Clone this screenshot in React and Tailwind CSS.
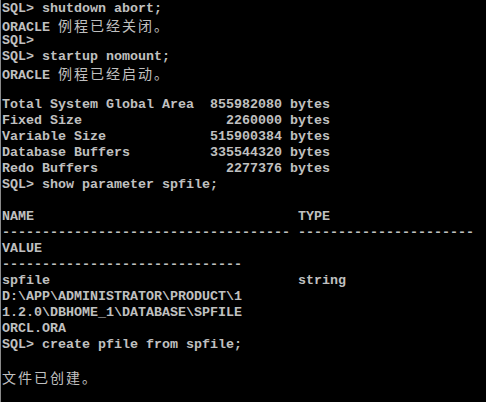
const lines = [
  [["SQL> shutdown abort;"]],
  [["ORACLE "], ["例程已经关闭。", true]],
  [["SQL>"]],
  [["SQL> startup nomount;"]],
  [["ORACLE "], ["例程已经启动。", true]],
  [[""]],
  [["Total System Global Area  855982080 bytes"]],
  [["Fixed Size                  2260000 bytes"]],
  [["Variable Size             515900384 bytes"]],
  [["Database Buffers          335544320 bytes"]],
  [["Redo Buffers                2277376 bytes"]],
  [["SQL> show parameter spfile;"]],
  [[""]],
  [["NAME                                 TYPE"]],
  [["------------------------------------ ----------------------"]],
  [["VALUE"]],
  [["------------------------------"]],
  [["spfile                               string"]],
  [["D:\\APP\\ADMINISTRATOR\\PRODUCT\\1"]],
  [["1.2.0\\DBHOME_1\\DATABASE\\SPFILE"]],
  [["ORCL.ORA"]],
  [["SQL> create pfile from spfile;"]],
  [[""]],
  [["文件已创建。", true]],
];

export default function App() {
  return (
    <div className="w-[486px] h-[402px] bg-black overflow-hidden border-l border-[#8a8a8a] pl-[1px] pt-[1px] flex flex-col">
      {lines.map((segs, i) => (
        <div
          key={i}
          className="h-[16px] leading-[16px] whitespace-pre text-[#c0c0c0] font-bold text-[13.34px] font-['Liberation_Mono',monospace] overflow-visible"
        >
          {segs.map(([t, cjk], j) =>
            cjk ? (
              <span
                key={j}
                className="font-normal text-[14px] leading-[16px] tracking-[2px] font-['Noto_Sans_CJK_SC',sans-serif]"
              >
                {t}
              </span>
            ) : (
              <span key={j}>{t}</span>
            )
          )}
        </div>
      ))}
    </div>
  );
}
